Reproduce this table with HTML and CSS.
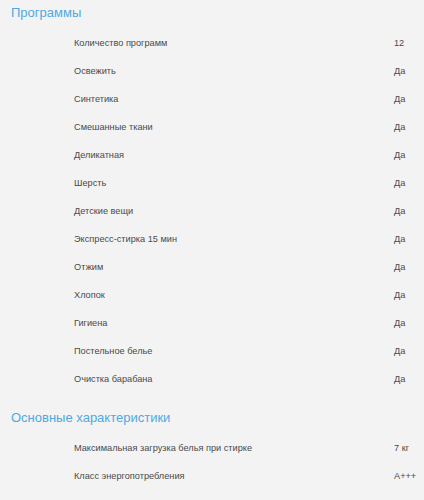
FILE: index.html
```html
<!DOCTYPE html>
<html lang="ru">
  <head>
    <meta charset="UTF-8" />
    <meta name="viewport" content="width=device-width, initial-scale=1.0" />
    <title>Характеристики</title>
    <link rel="stylesheet" href="styles.css">
  </head>
  <body>
    <div class="specs">
      <h2 class="specs-title">Программы</h2>
      <div class="spec-row"><span class="spec-name">Количество программ</span><span class="spec-value">12</span></div>
      <div class="spec-row"><span class="spec-name">Освежить</span><span class="spec-value">Да</span></div>
      <div class="spec-row"><span class="spec-name">Синтетика</span><span class="spec-value">Да</span></div>
      <div class="spec-row"><span class="spec-name">Смешанные ткани</span><span class="spec-value">Да</span></div>
      <div class="spec-row"><span class="spec-name">Деликатная</span><span class="spec-value">Да</span></div>
      <div class="spec-row"><span class="spec-name">Шерсть</span><span class="spec-value">Да</span></div>
      <div class="spec-row"><span class="spec-name">Детские вещи</span><span class="spec-value">Да</span></div>
      <div class="spec-row"><span class="spec-name">Экспресс-стирка 15 мин</span><span class="spec-value">Да</span></div>
      <div class="spec-row"><span class="spec-name">Отжим</span><span class="spec-value">Да</span></div>
      <div class="spec-row"><span class="spec-name">Хлопок</span><span class="spec-value">Да</span></div>
      <div class="spec-row"><span class="spec-name">Гигиена</span><span class="spec-value">Да</span></div>
      <div class="spec-row"><span class="spec-name">Постельное белье</span><span class="spec-value">Да</span></div>
      <div class="spec-row"><span class="spec-name">Очистка барабана</span><span class="spec-value">Да</span></div>
    </div>

    <div class="specs">
      <h2 class="specs-title">Основные характеристики</h2>
      <div class="spec-row"><span class="spec-name">Максимальная загрузка белья при стирке</span><span class="spec-value">7 кг</span></div>
      <div class="spec-row"><span class="spec-name">Класс энергопотребления</span><span class="spec-value">A+++</span></div>
    </div>
  </body>
</html>
```

FILE: styles.css
```css
body {
  margin: 0;
  background-color: #f3f3f3;
  font-family: "Liberation Sans", Arial, sans-serif;
  color: #4a4a4a;
}
.specs {
  margin-bottom: 12px;
}
.specs-title {
  margin: 0;
  padding: 3px 0 6px 11px;
  font-size: 13px;
  line-height: 20px;
  font-weight: normal;
  color: #4fa9e2;
}
.spec-row {
  display: grid;
  grid-template-columns: 1fr 30px;
  height: 28px;
  line-height: 28px;
  font-size: 9.2px;
}
.spec-name {
  padding-left: 74px;
}
.spec-value {
  white-space: nowrap;
}
```
